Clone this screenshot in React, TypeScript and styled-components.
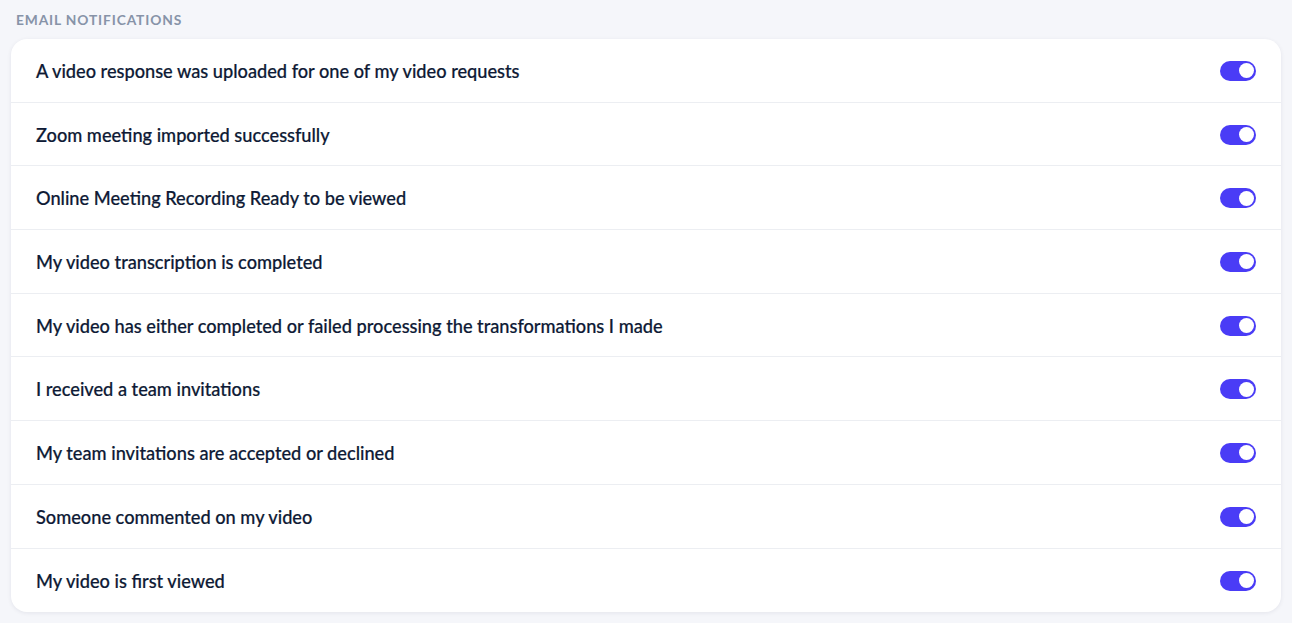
import React, { useState } from 'react';
import styled, { createGlobalStyle } from 'styled-components';

const GlobalStyle = createGlobalStyle`
  html, body {
    margin: 0;
    padding: 0;
    background: #f5f6fa;
  }
  body {
    font-family: Lato, "Noto Sans", sans-serif;
  }
`;

const Page = styled.div`
  padding: 11px;
  display: flex;
  flex-direction: column;
`;

const SectionTitle = styled.h3`
  margin: 0 0 11px 5px;
  font-size: 13.8px;
  font-weight: 700;
  letter-spacing: 0.85px;
  color: #8793a8;
  text-transform: uppercase;
  line-height: 17px;
`;

const Card = styled.div`
  background: #ffffff;
  border-radius: 16px;
  box-shadow: 0 1px 4px rgba(20, 30, 60, 0.08);
  display: flex;
  flex-direction: column;
`;

const Row = styled.div`
  box-sizing: border-box;
  height: 63.7px;
  display: flex;
  align-items: center;
  justify-content: space-between;
  padding: 1px 25px 0;
  border-bottom: 1px solid #eceef2;

  &:last-child {
    border-bottom: none;
  }
`;

const Label = styled.span`
  font-size: 18.2px;
  font-weight: 500;
  color: #0e1a35;
  -webkit-text-stroke: 0.2px #0e1a35;
`;

const Switch = styled.button<{ $on: boolean }>`
  position: relative;
  width: 36px;
  height: 20px;
  padding: 0;
  border: none;
  border-radius: 10px;
  background: ${({ $on }) => ($on ? '#4a3cf6' : '#d4d8e0')};
  cursor: pointer;

  &::after {
    content: '';
    position: absolute;
    top: 2.5px;
    left: ${({ $on }) => ($on ? '18.5px' : '2.5px')};
    width: 15px;
    height: 15px;
    border-radius: 50%;
    background: #ffffff;
  }
`;

const notifications = [
  'A video response was uploaded for one of my video requests',
  'Zoom meeting imported successfully',
  'Online Meeting Recording Ready to be viewed',
  'My video transcription is completed',
  'My video has either completed or failed processing the transformations I made',
  'I received a team invitations',
  'My team invitations are accepted or declined',
  'Someone commented on my video',
  'My video is first viewed',
];

const App = () => {
  const [enabled, setEnabled] = useState<boolean[]>(notifications.map(() => true));

  const toggle = (index: number) => {
    setEnabled((prev) => prev.map((value, i) => (i === index ? !value : value)));
  };

  return (
    <Page>
      <GlobalStyle />
      <SectionTitle>Email Notifications</SectionTitle>
      <Card>
        {notifications.map((text, index) => (
          <Row key={text}>
            <Label>{text}</Label>
            <Switch
              type='button'
              role='switch'
              aria-checked={enabled[index]}
              $on={enabled[index]}
              onClick={() => toggle(index)}
            />
          </Row>
        ))}
      </Card>
    </Page>
  );
};

export default App;
